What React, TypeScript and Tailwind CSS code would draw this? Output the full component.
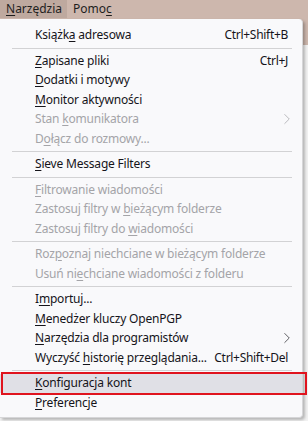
import { ChevronRight } from "lucide-react";

type Item = {
  label: string;
  key: number; // index of underlined letter
  shortcut?: string;
  disabled?: boolean;
  submenu?: boolean;
  active?: boolean;
};

type Entry = Item | "sep";

const ENTRIES: Entry[] = [
  { label: "Książka adresowa", key: 6, shortcut: "Ctrl+Shift+B" },
  "sep",
  { label: "Zapisane pliki", key: 0, shortcut: "Ctrl+J" },
  { label: "Dodatki i motywy", key: 0 },
  { label: "Monitor aktywności", key: 0 },
  { label: "Stan komunikatora", key: 5, disabled: true, submenu: true },
  { label: "Dołącz do rozmowy...", key: 1, disabled: true },
  "sep",
  { label: "Sieve Message Filters", key: 0 },
  "sep",
  { label: "Filtrowanie wiadomości", key: 0, disabled: true },
  { label: "Zastosuj filtry w bieżącym folderze", key: 18, disabled: true },
  { label: "Zastosuj filtry do wiadomości", key: 19, disabled: true },
  "sep",
  { label: "Rozpoznaj niechciane w bieżącym folderze", key: 3, disabled: true },
  { label: "Usuń niechciane wiadomości z folderu", key: 7, disabled: true },
  "sep",
  { label: "Importuj...", key: 1 },
  { label: "Menedżer kluczy OpenPGP", key: 0 },
  { label: "Narzędzia dla programistów", key: 0, submenu: true },
  { label: "Wyczyść historię przeglądania...", key: 8, shortcut: "Ctrl+Shift+Del" },
  "sep",
  { label: "Konfiguracja kont", key: 0, active: true },
  { label: "Preferencje", key: 0 },
];

function Accel({ text, at }: { text: string; at: number }): React.JSX.Element {
  return (
    <span className="whitespace-pre">
      {text.slice(0, at)}
      <span className="underline underline-offset-2">{text[at]}</span>
      {text.slice(at + 1)}
    </span>
  );
}

function MenuRow({ it }: { it: Item }): React.JSX.Element {
  const color = it.disabled ? "text-[#a4a4a8]" : "text-[#15141a]";
  return (
    <div className={`flex h-[19.5px] items-center justify-between gap-[6px] pl-[35px] pr-[14px] tracking-[-0.2px] ${color} ${it.active ? "bg-[#e0e0e6]" : ""}`}>
      <Accel text={it.label} at={it.key} />
      {it.shortcut && <span className="tracking-[-0.3px]">{it.shortcut}</span>}
      {it.submenu && (
        <ChevronRight size={18} strokeWidth={1.3}
          className={it.disabled ? "-mr-[8px] text-[#b8b8bc]" : "-mr-[8px] text-[#5c5c60]"} />
      )}
    </div>
  );
}

export default function App(): React.JSX.Element {
  return (
    <div className="relative h-[421px] w-[308px] overflow-hidden bg-[#f2f2f2] text-[12px] leading-none"
      style={{ fontFamily: '"Noto Sans", "Liberation Sans", sans-serif' }}>
      <div className="h-[45px] bg-[#cdb7ad]">
        <div className="flex h-[18px] items-center text-[#1e1e1e]">
          <span className="flex h-full items-center bg-[#bea99f] pl-[6px] pr-[5px]">
            <Accel text="Narzędzia" at={0} />
          </span>
          <span className="pl-[6px]"><Accel text="Pomoc" at={4} /></span>
        </div>
      </div>

      <div className="absolute left-0 top-[19px] w-[303px] rounded-br-[4px] rounded-tr-[4px] border-r border-b border-[#d6d6d8] bg-[#f9f9fb] pt-[6.5px] pb-[4.5px] shadow-[2px_2px_3px_rgba(0,0,0,0.25)]">
        {ENTRIES.map((e, i) =>
          e === "sep" ? (
            <div key={i} className="py-[2.5px] pl-[12px] pr-[10px]">
              <div className="h-px bg-[#d2d2d4]" />
            </div>
          ) : (
            <MenuRow key={i} it={e} />
          ),
        )}
      </div>

      <div className="absolute left-[1px] top-[372px] h-[23px] w-[306px] border-2 border-[#e0141e]" />
    </div>
  );
}
